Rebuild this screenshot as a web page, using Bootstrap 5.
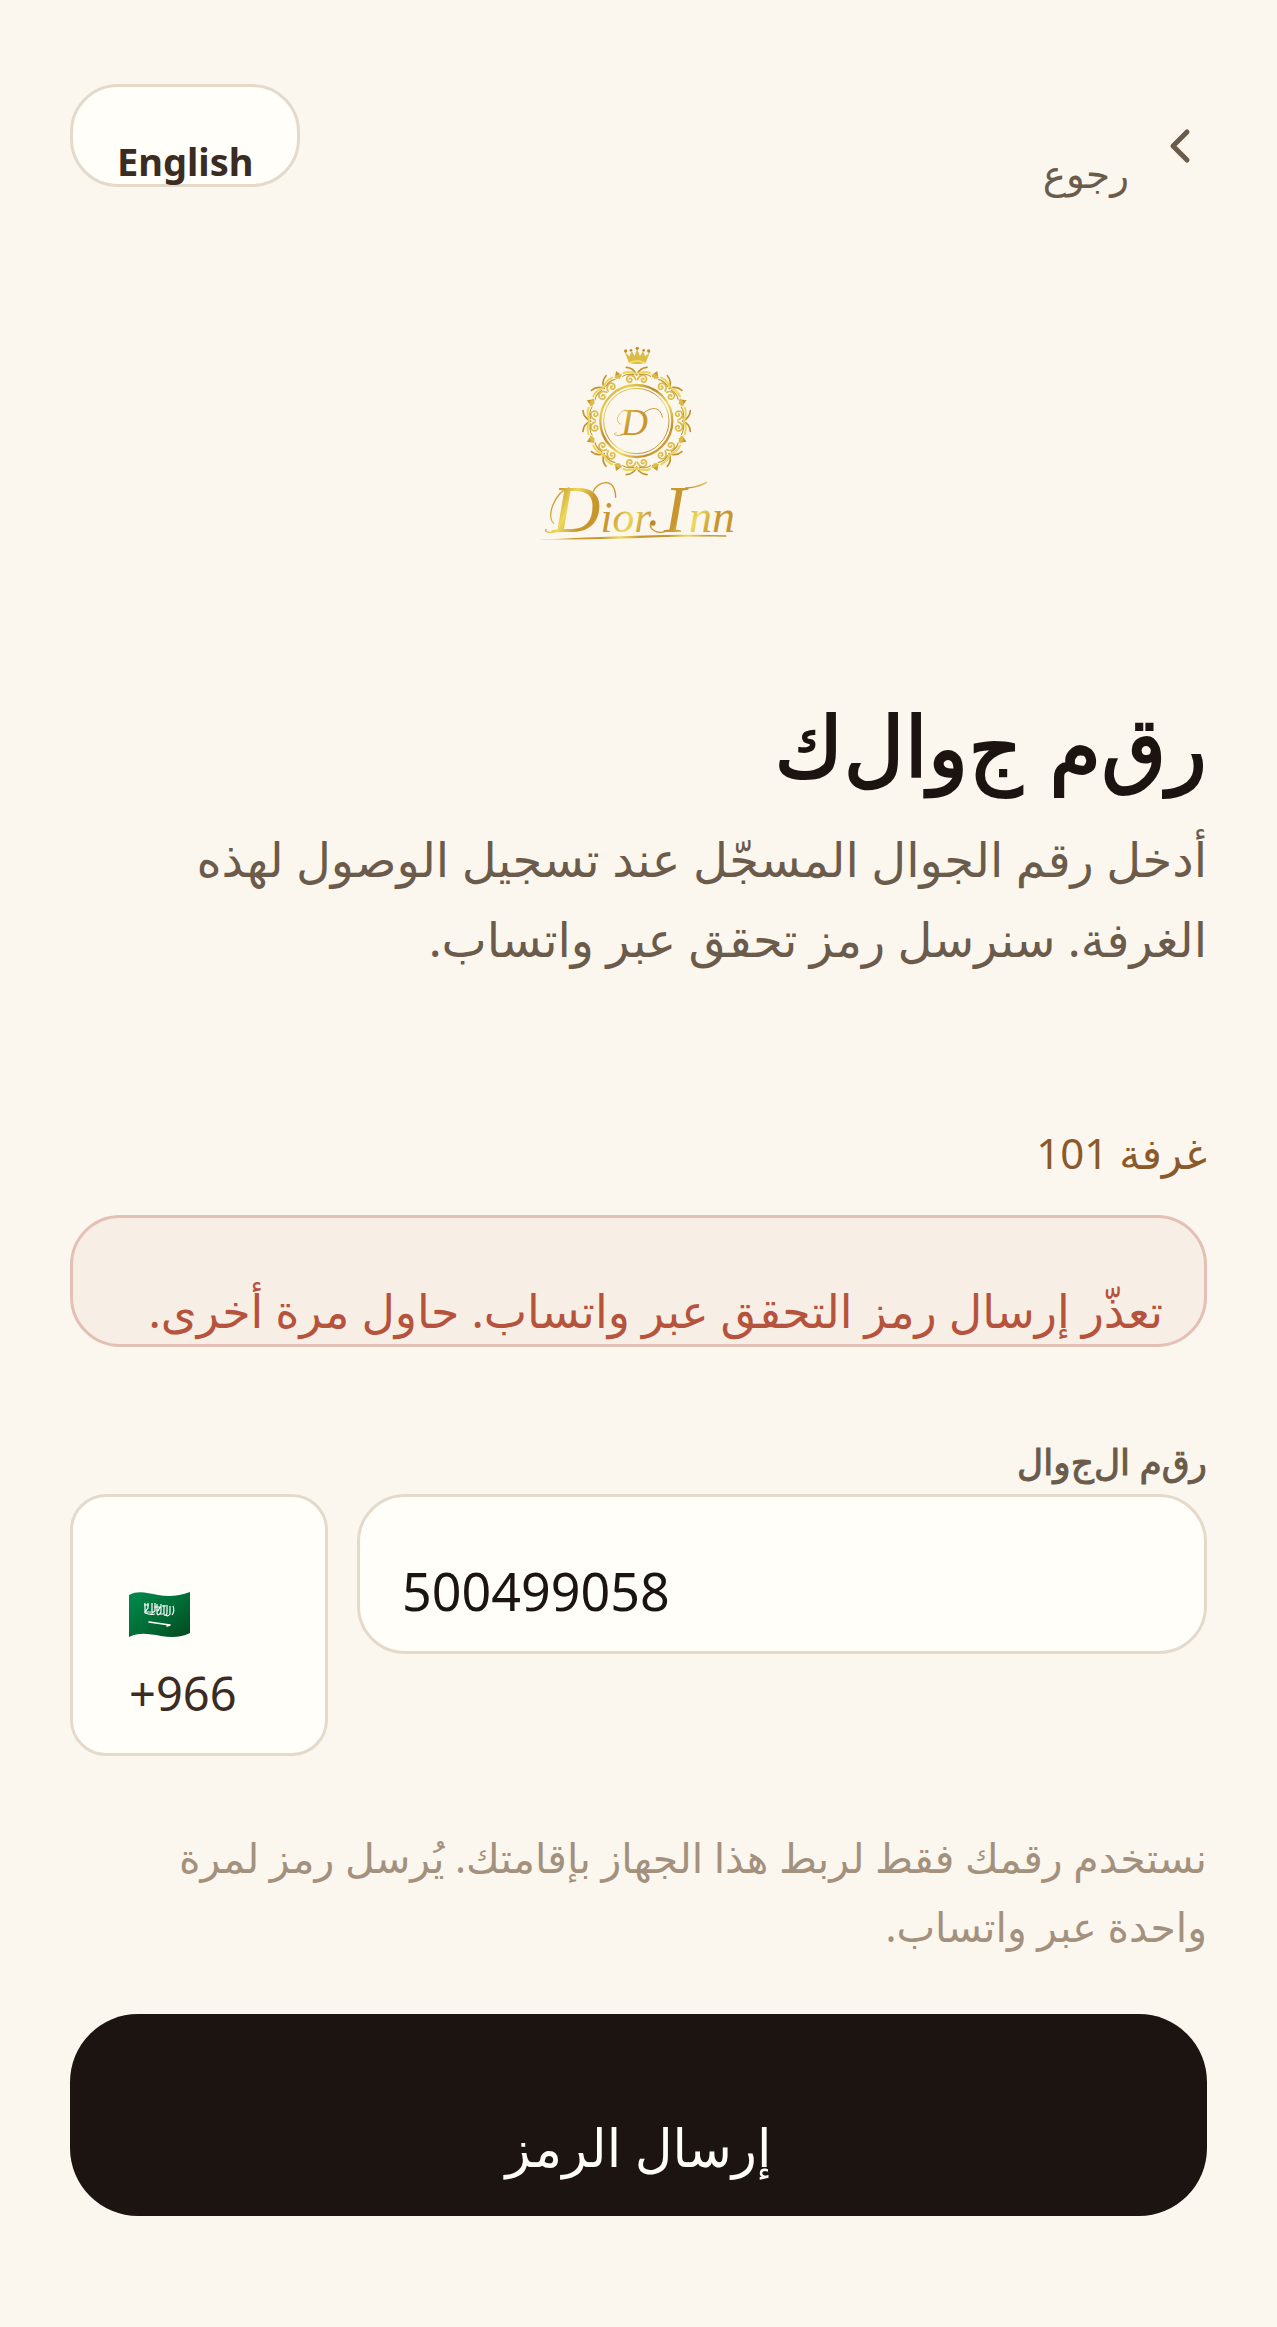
<!DOCTYPE html>
<html lang="ar" dir="rtl">
<head>
<meta charset="utf-8">
<meta name="viewport" content="width=device-width, initial-scale=1">
<title>Dior Inn</title>
<link rel="stylesheet" href="https://cdn.jsdelivr.net/npm/bootstrap@5.3.0/dist/css/bootstrap.min.css">
<style>
:root{--ink:#1c1411;--brown:#3a2c23;--muted-brown:#6b5b4b;--line:#e4dacc;--paper:#fffef9}
body{background:#fbf7ef;color:var(--ink);font-family:"Noto Sans","DejaVu Sans",sans-serif}
.screen{padding:84px 70px 111px}
.lang-btn{background:var(--paper);border:3px solid var(--line);border-radius:48px;padding:51px 44px 0;font-size:38px;line-height:46px;font-weight:700;color:var(--brown)}
.back-link{margin-top:35px;gap:24px;font-size:39px;line-height:60px;color:var(--muted-brown)}
.back-link span{padding-top:24px}
.brand-logo{margin-top:127px}
.page-title{font-family:"DejaVu Sans",sans-serif;font-size:84px;line-height:100px;font-weight:400;-webkit-text-stroke:2px currentColor;margin:138px 0 21px}
.intro{font-size:48px;line-height:80px;color:var(--muted-brown);padding-left:40px;margin-bottom:144px}
.room-no{font-size:42px;line-height:60px;color:#8b5a2b;margin-bottom:32px}
.error-box{background:#f7eee6;border:3px solid #e4bfb3;border-radius:50px;padding:62px 41px 4px;font-size:46px;line-height:60px;color:#b5533c;margin-bottom:90px}
.phone-label{font-size:36px;line-height:50px;color:var(--muted-brown);-webkit-text-stroke:1px currentColor;margin-bottom:7px}
.phone-row{gap:29px}
.dial-code{width:258px;background:var(--paper);border:3px solid var(--line);border-radius:36px;padding:95px 56px 30px;font-size:47px;line-height:60px;color:var(--brown);gap:26px}
.phone-input,.phone-input:focus{background:var(--paper);border:3px solid var(--line);border-radius:48px;height:160px;padding:32px 42px 0;font-size:52px;color:var(--ink)}
.hint{font-size:41px;line-height:69px;color:#a3917d;padding-left:40px;margin:67px 0 53px}
.send-btn,.send-btn:hover{background:var(--ink);color:var(--paper);border:0;border-radius:68px;padding:93px 44px 29px;font-size:52px;line-height:80px}
</style>
</head>
<body>
<main class="screen">
  <header class="d-flex justify-content-between align-items-start">
    <a href="#" class="back-link d-flex align-items-start text-decoration-none">
      <svg width="54" height="54" viewBox="0 0 54 54" fill="none" stroke="currentColor" stroke-width="5" stroke-linecap="round" stroke-linejoin="round" aria-hidden="true"><path d="M34 13 20 27l14 14"/></svg>
      <span>رجوع</span>
    </a>
    <button type="button" class="lang-btn" dir="ltr">English</button>
  </header>

  <div class="brand-logo d-flex justify-content-center" dir="ltr">
    <svg width="240" height="230" viewBox="0 0 720 690" role="img" aria-label="Dior Inn">
      <defs>
        <linearGradient id="gold" x1="0" y1="0" x2="1" y2="1">
          <stop offset="0" stop-color="#c08a2c"/><stop offset=".2" stop-color="#e8cf52"/><stop offset=".4" stop-color="#bb8528"/><stop offset=".6" stop-color="#efe066"/><stop offset=".8" stop-color="#c28c2e"/><stop offset="1" stop-color="#e6cd55"/>
        </linearGradient>
        <linearGradient id="goldText" gradientUnits="userSpaceOnUse" x1="80" y1="470" x2="160" y2="510" spreadMethod="reflect">
          <stop offset="0" stop-color="#c8962f"/><stop offset=".4" stop-color="#c8962f"/><stop offset="1" stop-color="#ecd95a"/>
        </linearGradient>
        <g id="palmette" fill="none" stroke-linecap="round">
          <path stroke="#dcbc46" stroke-width="5" d="M-3 -124C-6 -138 -24 -142 -29 -130C-32 -119 -20 -112 -15 -120C-12 -127 -19 -130 -22 -126M3 -124C6 -138 24 -142 29 -130C32 -119 20 -112 15 -120C12 -127 19 -130 22 -126"/>
          <path stroke="#c4912f" stroke-width="5" d="M0 -138C-6 -152 -14 -160 -31 -161M0 -138C6 -152 14 -160 31 -161"/>
          <path stroke="#ead757" stroke-width="6" d="M-2 -142C-14 -148 -25 -150 -40 -144M2 -142C14 -148 25 -150 40 -144"/>
          <path stroke="#bd882b" stroke-width="3" d="M-8 -139C-20 -142 -32 -141 -42 -134M8 -139C20 -142 32 -141 42 -134"/>
        </g>
        <g id="bead"><path d="M0 -162L8 -149 0 -136 -8 -149Z" fill="#c9982f"/><path d="M-13 -146Q0 -155 13 -146L7 -139H-7Z" fill="#dcbc46"/></g>
      </defs>
      <path d="M317 65l14 14 7-16 9 15 7-22 9 22 9-15 7 16 14-14-13 34q-25 6-50 0z" fill="#dcbc46"/>
      <path d="M331 98Q354 88 379 98" fill="none" stroke="#f1e26b" stroke-width="5"/>
      <g fill="#c28d2e"><circle cx="320" cy="63" r="5"/><circle cx="336" cy="61" r="4"/><circle cx="355" cy="55" r="5"/><circle cx="374" cy="61" r="4"/><circle cx="389" cy="63" r="5"/></g>
      <g transform="translate(353 273)">
        <use href="#palmette"/><use href="#palmette" transform="rotate(45)"/><use href="#palmette" transform="rotate(90)"/><use href="#palmette" transform="rotate(135)"/><use href="#palmette" transform="rotate(180)"/><use href="#palmette" transform="rotate(225)"/><use href="#palmette" transform="rotate(270)"/><use href="#palmette" transform="rotate(315)"/>
        <use href="#bead" transform="rotate(22.5)"/><use href="#bead" transform="rotate(67.5)"/><use href="#bead" transform="rotate(112.5)"/><use href="#bead" transform="rotate(157.5)"/><use href="#bead" transform="rotate(202.5)"/><use href="#bead" transform="rotate(247.5)"/><use href="#bead" transform="rotate(292.5)"/><use href="#bead" transform="rotate(337.5)"/>
      </g>
      <g fill="none" stroke="url(#gold)"><circle cx="352" cy="273" r="108" stroke-width="7"/><circle cx="352" cy="273" r="98" stroke-width="3"/></g>
      <g font-family="'Liberation Serif',serif" font-style="italic" fill="url(#goldText)">
        <text x="306" y="314" font-size="112">D</text>
        <text x="100" y="606" font-size="200">D<tspan font-size="130">ior </tspan><tspan x="434">I</tspan><tspan x="510" font-size="138">nn</tspan></text>
      </g>
      <g fill="none" stroke="url(#goldText)" stroke-linecap="round">
        <path stroke-width="3" d="M318 240C296 248 286 274 304 282M376 248C390 234 424 224 430 262M310 314C292 322 276 310 292 309"/>
        <path stroke-width="4" d="M150 474C108 486 80 560 104 580M222 486C236 452 288 440 290 502M116 604C96 610 72 606 82 598"/>
        <path stroke-width="4" d="M440 604C412 614 388 596 396 578M500 474Q530 474 562 458"/>
      </g>
      <circle cx="402" cy="579" r="8" fill="#bd882b"/>
      <path d="M54 629Q200 622 350 617T622 616L622 620Q500 619 360 624T54 629z" fill="url(#goldText)"/>
    </svg>
  </div>

  <h1 class="page-title">ر&zwnj;ق&zwnj;م ج&zwnj;و&zwnj;ا&zwnj;ل&zwnj;ك</h1>
  <p class="intro">أدخل رقم الجوال المسجّل عند تسجيل الوصول لهذه الغرفة. سنرسل رمز تحقق عبر واتساب.</p>

  <form>
    <p class="room-no">غرفة 101</p>
    <div class="error-box" role="alert">تعذّر إرسال رمز التحقق عبر واتساب. حاول مرة أخرى.</div>
    <label for="phone" class="phone-label d-block">ر&zwnj;ق&zwnj;م ا&zwnj;ل&zwnj;ج&zwnj;و&zwnj;ا&zwnj;ل</label>
    <div class="phone-row d-flex align-items-start" dir="ltr">
      <div class="dial-code d-flex flex-column align-items-start flex-shrink-0">
        <svg width="61" height="45" viewBox="0 0 61 45" aria-hidden="true">
          <defs><linearGradient id="flag" x1="0" y1="0" x2="1" y2="1"><stop offset="0" stop-color="#008b50"/><stop offset=".55" stop-color="#006b35"/><stop offset="1" stop-color="#00491f"/></linearGradient></defs>
          <path d="M0 3C9-2 18 1 29 3S50 4 61 0V41C53 45 44 46 32 44S10 40 0 45Z" fill="url(#flag)"/>
          <path d="M16 11v10M15 13h5M19 11v5l-3 4h6M23 11v10l3-2v-8M28 12v10M25 15h6l-2 4M32 12v8q-2 4-4 2M35 13v9h-4M38 13v7q0 4-3 3M41 14v8q-2 3-4 1M44 14q2 5-1 9M16 21q5 2 10 1M33 14h4" fill="none" stroke="#fff" stroke-width="1.2"/>
          <path d="M20 30 41 33M38 34l3-1" fill="none" stroke="#fff" stroke-width="1.6" stroke-linecap="round"/>
        </svg>
        <span>+966</span>
      </div>
      <input id="phone" type="tel" class="phone-input form-control" value="500499058">
    </div>
    <p class="hint">نستخدم رقمك فقط لربط هذا الجهاز بإقامتك. يُرسل رمز لمرة واحدة عبر واتساب.</p>
    <button type="submit" class="send-btn btn w-100">إرسال الرمز</button>
  </form>
</main>
<script src="https://cdn.jsdelivr.net/npm/bootstrap@5.3.0/dist/js/bootstrap.bundle.min.js"></script>
</body>
</html>
